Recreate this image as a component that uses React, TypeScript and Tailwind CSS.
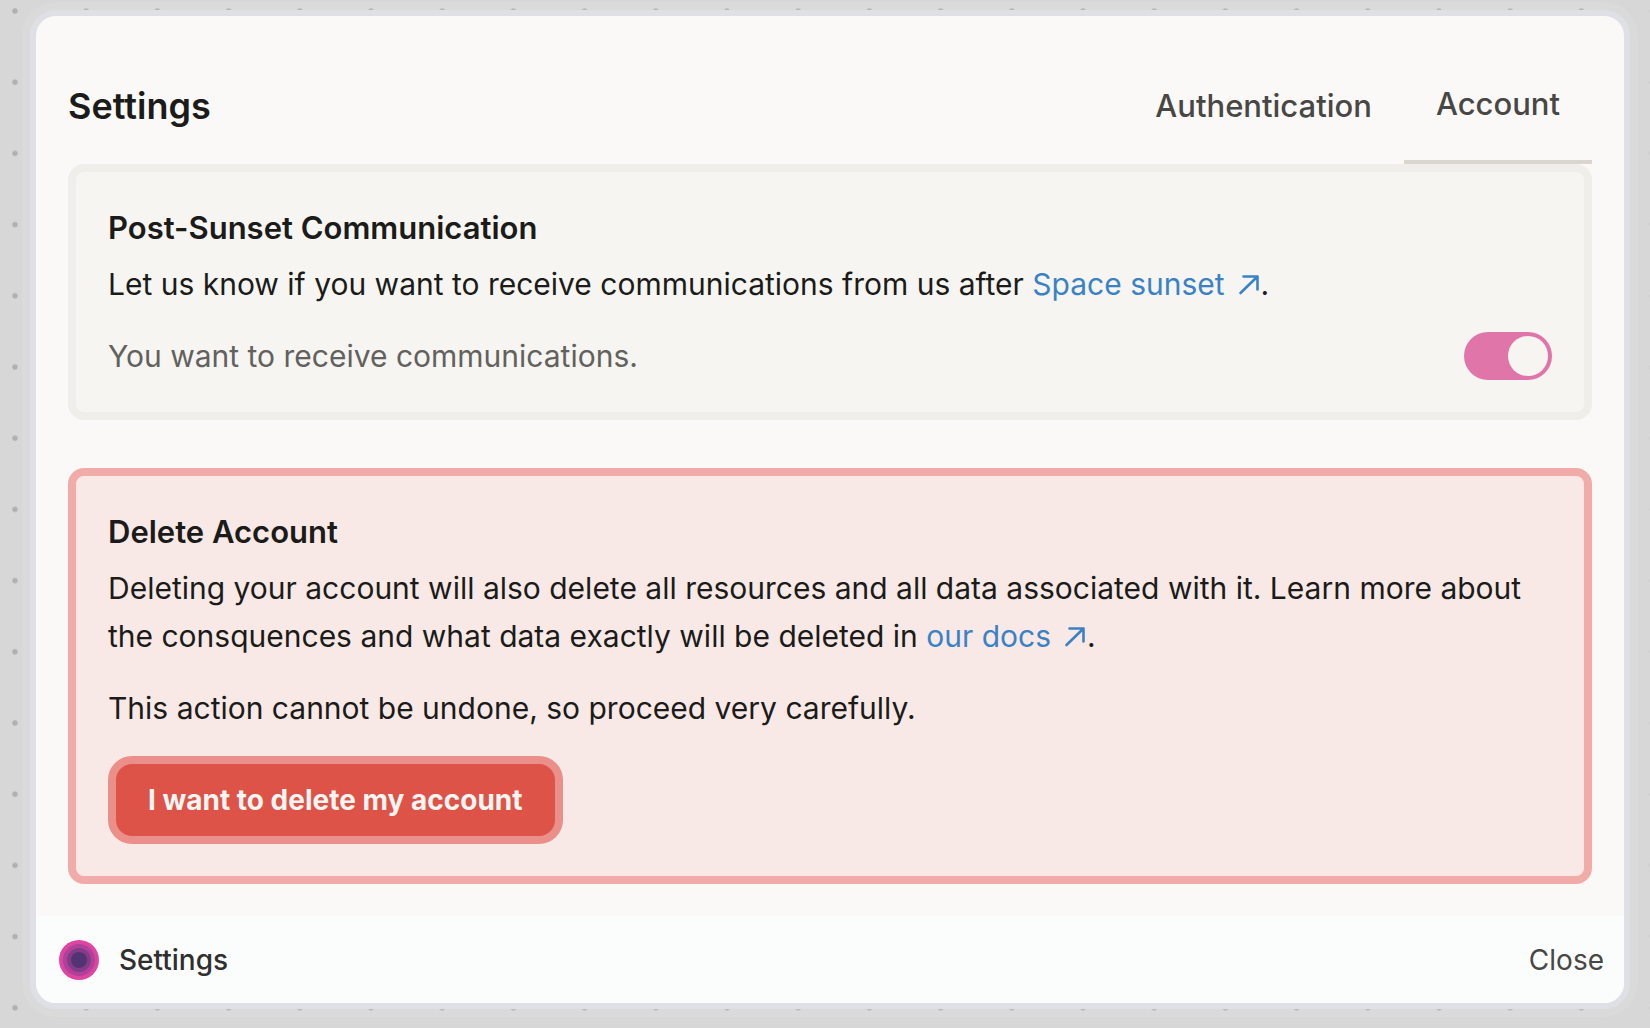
import { useState } from "react";
import type { ReactNode } from "react";

function DotGrid() {
  return (
    <svg className="absolute inset-0 h-full w-full" aria-hidden="true">
      <defs>
        <pattern id="dots" x="-20.6" y="-24.6" width="71.2" height="71.2" patternUnits="userSpaceOnUse">
          <circle cx="35.6" cy="35.6" r="2.7" fill="#b0b0b0" />
        </pattern>
      </defs>
      <rect width="100%" height="100%" fill="url(#dots)" />
    </svg>
  );
}

function ExternalLink({ children }: { children: ReactNode }) {
  return (
    <a href="#" className="text-[#3b82c4]">
      {children}
      <svg
        className="ml-3 inline-block h-6 w-6 align-baseline"
        viewBox="0 0 24 24"
        fill="none"
        stroke="currentColor"
        strokeWidth="2.6"
        strokeLinecap="round"
        strokeLinejoin="round"
        aria-hidden="true"
      >
        <path d="M3.5 22 20.5 5.5M6.5 5.5H20.5V18.5" />
      </svg>
    </a>
  );
}

function Logo() {
  return (
    <svg className="h-10 w-10" viewBox="0 0 40 40" aria-hidden="true">
      <circle cx="20" cy="20" r="20" fill="#dd45a3" />
      <circle cx="20" cy="20" r="16" fill="#b04198" />
      <circle cx="20" cy="20" r="12" fill="#853b8a" />
      <circle cx="20" cy="20" r="8" fill="#523474" />
    </svg>
  );
}

export default function App() {
  const [receive, setReceive] = useState(true);

  return (
    <div className="relative flex min-h-screen bg-[#d7d7d7] pt-[10px] pr-5 pb-[19px] pl-[30px] font-['Inter',sans-serif] text-[30px] leading-[48px] text-[#1b1b1a]">
      <DotGrid />
      <section className="relative flex grow flex-col overflow-hidden rounded-[26px] border-[6px] border-[#dfe0e5] bg-[#faf9f7] shadow-[0_0_0_8px_rgba(255,255,255,0.08)]">
        <main className="grow px-8 py-8">
          <header className="flex h-[116px] items-stretch justify-between">
            <h1 className="flex items-center text-[36px] font-semibold">Settings</h1>
            <nav className="flex text-[31px] font-medium text-[#484745]">
              <button type="button" className="px-8">Authentication</button>
              <button type="button" className="border-b-4 border-[#dad5ce] px-8">Account</button>
            </nav>
          </header>

          <section className="rounded-2xl border-8 border-[#efeeea] bg-[#f6f5f1] p-8">
            <h2 className="text-[31px] font-semibold">Post-Sunset Communication</h2>
            <p className="mt-2">
              Let us know if you want to receive communications from us after{" "}
              <ExternalLink>Space sunset</ExternalLink>.
            </p>
            <div className="mt-6 flex items-center justify-between">
              <label htmlFor="receive" className="text-[#62615e]">
                You want to receive communications.
              </label>
              <input
                id="receive"
                type="checkbox"
                role="switch"
                checked={receive}
                onChange={(e) => setReceive(e.target.checked)}
                className="flex h-12 w-[88px] cursor-pointer appearance-none rounded-full bg-[#a8a6a1] p-1 before:h-10 before:w-10 before:rounded-full before:bg-[#f6f5f1] checked:justify-end checked:bg-[#e075a9]"
              />
            </div>
          </section>

          <section className="mt-12 rounded-2xl border-8 border-[#f1aba8] bg-[#f9e9e6] p-8">
            <h2 className="text-[31px] font-semibold">Delete Account</h2>
            <p className="mt-2">
              Deleting your account will also delete all resources and all data associated with it. Learn more about{" "}
              <span>the consquences and what data exactly will be deleted in </span>
              <ExternalLink>our docs</ExternalLink>.
            </p>
            <p className="mt-6">This action cannot be undone, so proceed very carefully.</p>
            <button
              type="button"
              className="mt-6 flex h-[88px] items-center rounded-3xl border-8 border-[#ea8f89] bg-[#de5348] px-8 text-[28px] font-bold text-[#f9f5f2]"
            >
              I want to delete my account
            </button>
          </section>
        </main>

        <footer className="flex h-[87px] items-center bg-[#fbfdfc] pr-5 pl-[23px] text-[28px]">
          <Logo />
          <span className="ml-5 font-medium text-[#302f2e]">Settings</span>
          <button type="button" className="ml-auto text-[#484745]">Close</button>
        </footer>
      </section>
    </div>
  );
}
